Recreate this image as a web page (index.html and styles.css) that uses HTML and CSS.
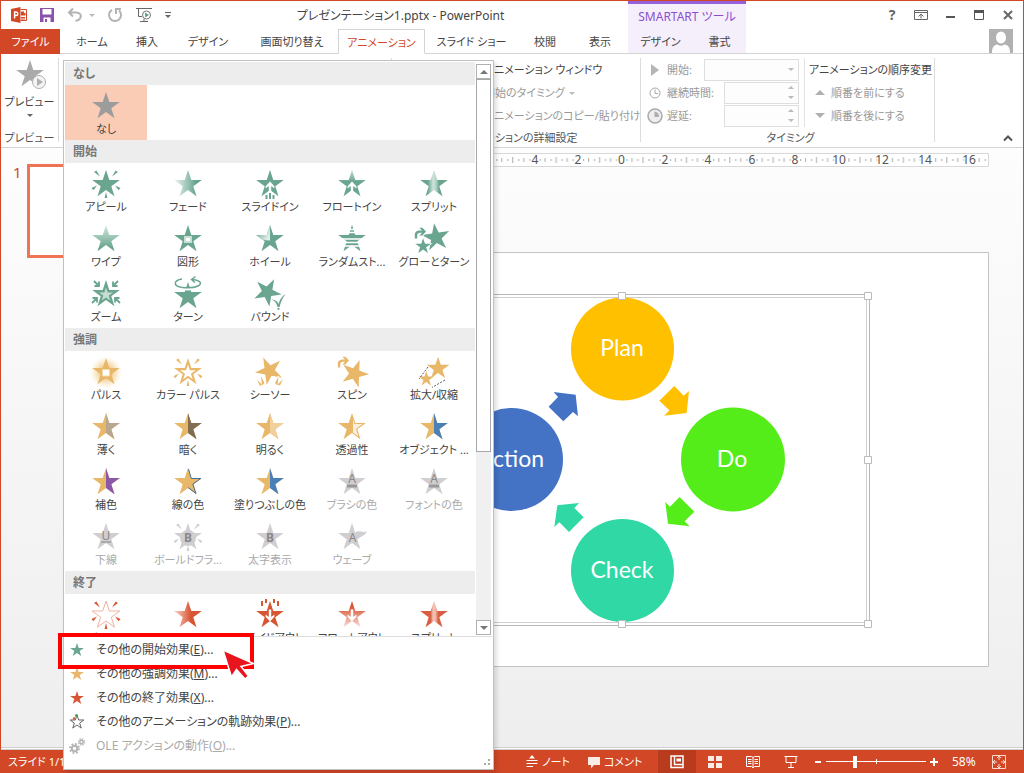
FILE: index.html
```html
<!DOCTYPE html>
<html lang="ja">
<head>
<meta charset="utf-8">
<title>プレゼンテーション1.pptx - PowerPoint</title>
<link rel="stylesheet" href="styles.css">
</head>
<body>
<svg class="defs" aria-hidden="true">
  <defs>
    <path id="star" d="M16 2L19.3 12H29.8L21.3 18.2L24.5 28.2L16 22L7.5 28.2L10.7 18.2L2.2 12H12.7Z"/>
    <path id="half" d="M16 2L19.3 12H29.8L21.3 18.2L24.5 28.2L16 22Z"/>
    <path id="rays" d="M4 4L6.4 2.4L10 8.6ZM28 4L25.6 2.4L22 8.6ZM1.5 20L3.4 22.2L7 17.4ZM30.5 20L28.6 22.2L25 17.4ZM14.6 30h2.8L16 24Z"/>
    <path id="up" d="M16 13.4L20.4 18.2V20.6L17.2 18V25.4H14.8V18L11.6 20.6V18.2Z"/>
    <path id="turn" d="M.8 11.6V8C.8 4.6 3 3.2 8 3.4L5.4 .8H8.4L12 4.6L8.4 8.6H5.4L8 5.8C4.6 5.4 3.2 6.2 3.2 8.4V11.6Z"/>
    <linearGradient id="g-fade"><stop offset=".1" stop-color="#dcebe5"/><stop offset=".8" stop-color="#64a38c"/></linearGradient>
    <linearGradient id="g-wipe" x2="0" y2="1"><stop offset="0" stop-color="#d8e9e2"/><stop offset=".9" stop-color="#64a38c"/></linearGradient>
    <linearGradient id="g-float" x2="0" y2="1"><stop offset="0" stop-color="#c2ddd2"/><stop offset=".45" stop-color="#69a58f"/></linearGradient>
    <linearGradient id="g-split"><stop offset=".28" stop-color="#69a58f"/><stop offset=".47" stop-color="#cfe4db"/><stop offset=".58" stop-color="#b0d2c4"/><stop offset=".68" stop-color="#69a58f"/></linearGradient>
    <linearGradient id="g-wheel" x2="1" y2=".6"><stop offset=".1" stop-color="#69a58f"/><stop offset="1" stop-color="#e0eee8"/></linearGradient>
    <linearGradient id="r-fade"><stop offset=".1" stop-color="#f3beb0"/><stop offset=".6" stop-color="#d85534"/></linearGradient>
    <linearGradient id="r-float" x2="0" y2="1"><stop offset=".2" stop-color="#d85534"/><stop offset="1" stop-color="#f9ddd6"/></linearGradient>
    <linearGradient id="r-split"><stop offset=".38" stop-color="#d85f41"/><stop offset=".46" stop-color="#f3bfb2"/><stop offset=".54" stop-color="#f3bfb2"/><stop offset=".66" stop-color="#d85f41"/></linearGradient>
    <radialGradient id="y-glow"><stop offset=".3" stop-color="#f0c67f"/><stop offset="1" stop-color="#f7dfb2" stop-opacity="0"/></radialGradient>
  </defs>
</svg>

<div class="app">
  <header class="titlebar">
    <div class="quick">
      <svg class="logo" viewBox="0 0 16 16"><path fill="#d24726" d="M0 2L9.5 0V16L0 14Z"/><path fill="none" stroke="#d24726" d="M9.5 2.5H15.5V13.5H9.5M10 10.5h4M10 12h4"/><path fill="#d24726" d="M10 4.5h3v1.500h1.500v2.500h-4.500z"/><path fill="none" stroke="#fff" stroke-width="1.500" d="M3.600 11.500V5H5.200Q6.800 5 6.800 6.800T5.200 8.600H3.600"/></svg>
      <button class="qbtn" aria-label="保存"><svg viewBox="0 0 16 16"><path fill="#8a52ab" d="M1 1H15V15H1Z"/><path fill="#fff" d="M3.500 2H12.500V7.500H3.500ZM4.500 10.500H11.500V15H4.500Z"/><path fill="#8a52ab" d="M6 12h2v3H6z"/></svg></button>
      <button class="qbtn undo" aria-label="元に戻す"><svg viewBox="0 0 16 16"><path fill="none" stroke="#b3b3b3" stroke-width="2" d="M6 1.500L2 5.500L6 9.500M2 5.500H9C13 5.500 14.500 8 13.500 10.500C12.800 12.500 11 13.500 8.500 14"/></svg><i class="caret light"></i></button>
      <button class="qbtn redo" aria-label="繰り返し"><svg viewBox="0 0 16 16"><path fill="none" stroke="#b3b3b3" stroke-width="2" d="M5 2.800A6 6 0 1 0 12 3.500M9 7V2H14"/></svg></button>
      <button class="qbtn show" aria-label="最初から"><svg viewBox="0 0 18 16"><path fill="none" stroke="#666" d="M1 1.500H17M3.500 2V9.500H7M5 14.500H13M9 12V14"/><circle cx="11.500" cy="8" r="4" fill="#fff" stroke="#777"/><path fill="#4f9f83" d="M10.200 5.600L13.800 8L10.200 10.400Z"/></svg></button>
      <button class="qbtn more" aria-label="カスタマイズ"><i class="bar"></i><i class="caret"></i></button>
    </div>
    <h1 class="doc">プレゼンテーション1.pptx - PowerPoint</h1>
    <div class="context">SMARTART ツール</div>
    <div class="winbtns">
      <button aria-label="ヘルプ" class="help">?</button>
      <button aria-label="リボンの表示"><svg viewBox="0 0 14 12"><path fill="none" stroke="#666" d="M.5 1.500H13.500V10.500H.5ZM1 3.500H13M7 9.500V5.500M4.500 7.500L7 5L9.500 7.500"/></svg></button>
      <button aria-label="最小化"><svg viewBox="0 0 14 12"><path stroke="#555" stroke-width="2" d="M3 8H12"/></svg></button>
      <button aria-label="最大化"><svg viewBox="0 0 14 12"><path fill="none" stroke="#555" d="M2.500 2V10.500H11.500V2"/><path stroke="#555" stroke-width="3" d="M2 2.500H12"/></svg></button>
      <button aria-label="閉じる"><svg viewBox="0 0 14 12"><path stroke="#666" stroke-width="2" d="M3 2L11 10M11 2L3 10"/></svg></button>
    </div>
  </header>

  <nav class="tabs">
    <button class="tab file">ファイル</button>
    <button class="tab">ホーム</button>
    <button class="tab">挿入</button>
    <button class="tab">デザイン</button>
    <button class="tab">画面切り替え</button>
    <button class="tab active">アニメーション</button>
    <button class="tab">スライド ショー</button>
    <button class="tab">校閲</button>
    <button class="tab">表示</button>
    <button class="tab smart">デザイン</button>
    <button class="tab smart">書式</button>
    <span class="account"><svg viewBox="0 0 24 24"><path fill="#b1b1b1" d="M0 0H24V24H0Z"/><ellipse cx="12" cy="8.500" rx="5" ry="6" fill="#fff"/><path fill="#fff" d="M3 24C3 18 5 16 8.500 15.500Q12 18 15.500 15.500C19 16 21 18 21 24Z"/></svg></span>
  </nav>

  <section class="ribbon">
    <div class="group preview">
      <button class="big">
        <svg viewBox="0 0 32 32"><use href="#star" fill="#aaa"/><circle cx="25" cy="24" r="6.500" fill="#f4f4f4" stroke="#b0b0b0"/><path fill="#b0b0b0" d="M23 20L29 24L23 28Z"/></svg>
        <span>プレビュー</span>
        <i class="caret"></i>
      </button>
      <div class="gname">プレビュー</div>
    </div>
    <div class="group animation"></div>
    <div class="group advanced">
      <div class="rows">
        <button class="cmd">アニメーション ウィンドウ</button>
        <button class="cmd" disabled>開始のタイミング<i class="caret light"></i></button>
        <button class="cmd" disabled>アニメーションのコピー/貼り付け</button>
      </div>
      <div class="gname">アニメーションの詳細設定</div>
    </div>
    <div class="group timing">
      <div class="split">
        <div class="fields">
          <div class="field"><svg viewBox="0 0 16 16"><path fill="#b5b5b5" d="M4 2L12 8L4 14Z"/></svg><label for="start">開始:</label><span class="box wide"><select id="start" disabled><option></option></select><i class="caret light"></i></span></div>
          <div class="field"><svg viewBox="0 0 16 16"><circle cx="8" cy="8" r="5" fill="none" stroke="#aaa"/><path fill="none" stroke="#aaa" d="M8 4.500V8.500H11"/></svg><label for="dur">継続時間:</label><span class="box"><input id="dur" disabled><span class="spin"><i class="caret light flip"></i><i class="caret light"></i></span></span></div>
          <div class="field"><svg viewBox="0 0 16 16"><circle cx="8" cy="8" r="7" fill="#f0edf0" stroke="#aaa" stroke-width="1.500"/><path fill="#b0adb0" d="M7.500 3.500A5 5 0 0 1 12 9H7.500Z"/></svg><label for="delay">遅延:</label><span class="box"><input id="delay" disabled><span class="spin"><i class="caret light flip"></i><i class="caret light"></i></span></span></div>
        </div>
        <div class="order">
          <div class="cmd">アニメーションの順序変更</div>
          <button class="cmd move" disabled><i class="tri flip"></i>順番を前にする</button>
          <button class="cmd move" disabled><i class="tri"></i>順番を後にする</button>
        </div>
      </div>
      <div class="gname">タイミング</div>
    </div>
    <button class="collapse" aria-label="リボンを折りたたむ"><svg viewBox="0 0 10 8"><path fill="none" stroke="#555" stroke-width="2" d="M1 6.500L5 2.500L9 6.500"/></svg></button>

    <div class="popup">
      <div class="gallery">
        <div class="list">
          <h2>なし</h2>
          <div class="items">
            <button class="item selected"><svg viewBox="0 0 32 32"><use href="#star" fill="#9c9c9c"/></svg>なし</button>
          </div>
          <h2>開始</h2>
          <div class="items green">
            <button class="item"><svg viewBox="0 0 32 32"><use href="#star"/><use href="#rays"/></svg>アピール</button>
            <button class="item"><svg viewBox="0 0 32 32"><use href="#star" fill="url(#g-fade)"/></svg>フェード</button>
            <button class="item"><svg viewBox="0 0 32 32"><use href="#star"/><use href="#up" fill="#fff"/><path d="M11.500 27h2v4h-2zM15 25h2v6h-2zM18.500 27h2v4h-2z"/></svg>スライドイン</button>
            <button class="item"><svg viewBox="0 0 32 32"><use href="#star" fill="url(#g-float)"/><use href="#up" fill="#fff"/></svg>フロートイン</button>
            <button class="item"><svg viewBox="0 0 32 32"><use href="#star" fill="url(#g-split)"/></svg>スプリット</button>
            <button class="item"><svg viewBox="0 0 32 32"><use href="#star" fill="url(#g-wipe)"/></svg>ワイプ</button>
            <button class="item"><svg viewBox="0 0 32 32"><use href="#star"/><path fill="#fff" stroke="#c9dfd6" stroke-width="2" d="M13 14h6v5h-6z"/></svg>図形</button>
            <button class="item"><svg viewBox="0 0 32 32"><use href="#star"/><path fill="url(#g-wheel)" d="M2.200 12H12.700L16 2V17.500L9 17Z"/></svg>ホイール</button>
            <button class="item"><svg viewBox="0 0 32 32"><use href="#star"/><path stroke="#fff" stroke-width="1.500" d="M2 6.500H30M2 9.500H30M2 16H30M2 19.500H30M2 23H30"/></svg>ランダムスト...</button>
            <button class="item"><svg viewBox="0 0 32 32"><use href="#star" transform="translate(2 -2) rotate(-8 16 16)"/><use href="#star" transform="translate(-4 14) scale(.57)" stroke="#fff" stroke-width="2" paint-order="stroke"/><use href="#turn" transform="translate(-4 4)" stroke="#fff" stroke-width="2" paint-order="stroke"/></svg>グローとターン</button>
            <button class="item"><svg viewBox="0 0 32 32"><use href="#star"/><use href="#star" transform="translate(8 8.500) scale(.5)" fill="#c7ddd4"/><path fill="none" stroke="currentColor" stroke-width="1.800" d="M4 3L8.500 7.500M9 3.500V8H4.500M28 3L23.500 7.500M23 3.500V8H27.500M2 25L6.500 20.500M2.500 20H7V24.500M30 25L25.500 20.500M29.500 20H25V24.500"/></svg>ズーム</button>
            <button class="item"><svg viewBox="0 0 32 32"><use href="#star" transform="translate(0 2)"/><path fill="none" stroke="#fff" stroke-width="3" d="M8 9.500C13 11.500 20 11.500 24 9.500"/><path fill="none" stroke="currentColor" stroke-width="1.500" d="M10 1C1 2.500 1.500 8 9 9.300C14 10 22 10 26 8C31 5.500 28 2 20 1.500M23.500 -1.500L19.500 1.500L23 4.500"/></svg>ターン</button>
            <button class="item"><svg viewBox="0 0 32 32"><use href="#star" transform="rotate(28 14 15) translate(-3 -2)"/><path d="M17 21.500C21 21.500 23.500 23 24.500 26C26 21 28 18 31.500 16C28.500 20 27 23.500 25.500 29H23.500C22.500 25 21 22.500 17 21.500ZM23.500 30h2v1.800h-2z"/></svg>バウンド</button>
          </div>
          <h2>強調</h2>
          <div class="items yellow">
            <button class="item"><svg viewBox="0 0 32 32"><circle cx="16" cy="16.500" r="16" fill="url(#y-glow)"/><use href="#star"/><path fill="#fff" stroke="#f4d9ab" d="M12.500 13.500h7v6.500h-7z"/></svg>パルス</button>
            <button class="item"><svg viewBox="0 0 32 32"><use href="#star"/><use href="#star" transform="translate(7 7.500) scale(.56)" fill="#fff"/><use href="#rays"/></svg>カラー パルス</button>
            <button class="item"><svg viewBox="0 0 32 32"><use href="#star" transform="rotate(-25 16 16) translate(0 -2)"/><path stroke="#fff" paint-order="stroke" stroke-width="2" d="M7 20.500L10.500 27L8 29.500ZM24.500 20.500L21 27L23.500 29.500Z"/><path d="M3 24L8 28.500L6 30ZM29 23L23.500 28.500L26 29.500Z"/></svg>シーソー</button>
            <button class="item"><svg viewBox="0 0 32 32"><use href="#star" transform="rotate(20 18 18) translate(2.500 1)"/><use href="#turn" transform="translate(1 0)"/></svg>スピン</button>
            <button class="item"><svg viewBox="0 0 32 32"><use href="#star" transform="translate(7 -1) scale(.82)"/><use href="#star" transform="translate(-.5 14) scale(.55)"/><path fill="none" stroke="#555" stroke-dasharray="2 1.500" d="M10 11L1 23M27 24L14 31.500"/></svg>拡大/収縮</button>
            <button class="item"><svg viewBox="0 0 32 32"><use href="#star"/><use href="#half" fill="#b9a88f"/></svg>薄く</button>
            <button class="item"><svg viewBox="0 0 32 32"><use href="#star"/><use href="#half" fill="#806d52"/></svg>暗く</button>
            <button class="item"><svg viewBox="0 0 32 32"><use href="#star"/><use href="#half" fill="#f2d09b"/></svg>明るく</button>
            <button class="item"><svg viewBox="0 0 32 32"><use href="#star"/><path fill="#fbeedb" d="M17 8L18.500 13H26.500L20 18L22.500 25.500L17 21.500Z"/></svg>透過性</button>
            <button class="item"><svg viewBox="0 0 32 32"><use href="#star"/><use href="#half" fill="#4a80b8"/></svg>オブジェクト ...</button>
            <button class="item"><svg viewBox="0 0 32 32"><use href="#star"/><use href="#half" fill="#8b58a8"/></svg>補色</button>
            <button class="item"><svg viewBox="0 0 32 32"><use href="#star"/><path fill="none" stroke="#456f94" d="M16.500 3L19.300 12.500H28.800L20.800 18.200L24 27.500L16 21.500"/></svg>線の色</button>
            <button class="item"><svg viewBox="0 0 32 32"><use href="#star"/><use href="#half" fill="#4a80b8"/></svg>塗りつぶしの色</button>
            <button class="item" disabled><svg viewBox="0 0 32 32"><use href="#star"/><text x="16" y="17" class="glyph">A</text><path fill="#999" d="M11 18.500h10v3H11z"/></svg>ブラシの色</button>
            <button class="item" disabled><svg viewBox="0 0 32 32"><use href="#star"/><text x="16" y="17" class="glyph">A</text><path fill="#999" d="M11 18.500h10v3H11z"/></svg>フォントの色</button>
            <button class="item" disabled><svg viewBox="0 0 32 32"><use href="#star"/><text x="16" y="19" class="glyph">U</text><path fill="#888" d="M11 20.500h10v1H11z"/></svg>下線</button>
            <button class="item" disabled><svg viewBox="0 0 32 32"><use href="#star"/><use href="#rays"/><circle cx="16" cy="17" r="8"/><text x="16" y="21" class="glyph strong">B</text></svg>ボールドフラ...</button>
            <button class="item" disabled><svg viewBox="0 0 32 32"><use href="#star"/><text x="16" y="21" class="glyph strong">B</text></svg>太字表示</button>
            <button class="item" disabled><svg viewBox="0 0 32 32"><use href="#star"/><path d="M19 12C23 8 26 13 31 10C29 15 25 15 21 18Z"/><text x="16.500" y="21" class="glyph">A</text></svg>ウェーブ</button>
          </div>
          <h2>終了</h2>
          <div class="items red">
            <button class="item"><svg viewBox="0 0 32 32"><use href="#star" fill="#fff" stroke="#eeb3a4"/><use href="#rays"/></svg>クリア</button>
            <button class="item"><svg viewBox="0 0 32 32"><use href="#star" fill="url(#r-fade)"/></svg>フェード</button>
            <button class="item"><svg viewBox="0 0 32 32"><use href="#star"/><use href="#up" fill="#fff" transform="translate(0 36) scale(1 -1)"/><path stroke="#fff" paint-order="stroke" stroke-width="2" d="M7 2h2v5H7zM11 0h2v4h-2zM19 0h2v4h-2zM23 2h2v5h-2z"/></svg>スライドアウト</button>
            <button class="item"><svg viewBox="0 0 32 32"><use href="#star" fill="url(#r-float)"/><use href="#up" fill="#fff" transform="translate(0 36) scale(1 -1)"/></svg>フロートアウト</button>
            <button class="item"><svg viewBox="0 0 32 32"><use href="#star" fill="url(#r-split)"/></svg>スプリット</button>
          </div>
        </div>
        <div class="scroll">
          <button class="arrow" aria-label="上へ"><i class="tri dark flip"></i></button>
          <div class="thumb"></div>
          <button class="arrow" aria-label="下へ"><i class="tri dark"></i></button>
        </div>
      </div>
      <div class="menu">
        <button class="entry green"><svg viewBox="0 0 32 32"><use href="#star"/></svg><span>その他の開始効果(<u>E</u>)...</span></button>
        <button class="entry yellow"><svg viewBox="0 0 32 32"><use href="#star"/></svg><span>その他の強調効果(<u>M</u>)...</span></button>
        <button class="entry red"><svg viewBox="0 0 32 32"><use href="#star"/></svg><span>その他の終了効果(<u>X</u>)...</span></button>
        <button class="entry"><svg viewBox="0 0 32 32"><use href="#star" fill="#fff" stroke="#666" stroke-width="2"/><circle cx="15" cy="3" r="3" fill="#4a9e4a"/><circle cx="10" cy="9" r="2.500" fill="#d9573a"/></svg><span>その他のアニメーションの軌跡効果(<u>P</u>)...</span></button>
        <button class="entry" disabled><svg viewBox="0 0 16 16"><g fill="none" stroke="#b4b4b4"><circle cx="5.500" cy="10.500" r="2.700" stroke-width="2"/><circle cx="5.500" cy="10.500" r="4.500" stroke-width="2" stroke-dasharray="1.800 1.730"/><circle cx="12.500" cy="4" r="1.700" stroke-width="1.500"/><circle cx="12.500" cy="4" r="3" stroke-width="1.500" stroke-dasharray="1.300 1.050"/></g></svg><span>OLE アクションの動作(<u>O</u>)...</span></button>
      </div>
      <svg class="grip" viewBox="0 0 8 8"><path fill="#aaa" d="M5 0h2v2H5zM5 4h2v2H5zM1 4h2v2H1z"/></svg>
      <div class="highlight"></div>
      <svg class="pointer" viewBox="0 0 36 36"><path fill="#e8141e" stroke="#fff" stroke-width="1.500" d="M2 2L32.500 15.500L20 18.500L27.500 28L24 31L15.500 21.500L10.500 29Z"/></svg>
    </div>
  </section>

  <main class="work">
    <aside class="thumbs"><span class="num">1</span><div class="thumbnail"></div></aside>
    <div class="editor">
      <svg class="ruler" viewBox="0 0 735 14">
        <defs><pattern id="ticks" width="43.400" height="14" x="367.500" patternUnits="userSpaceOnUse"><path fill="#aaa" d="M5 6h1v2h-1zM10 5h1v4h-1zM16 6h1v2h-1zM21 4h1v6h-1zM27 6h1v2h-1zM32 5h1v4h-1zM38 6h1v2h-1z"/></pattern></defs>
        <path fill="#fff" stroke="#d8d8d8" d="M.5 .5H734.500V13.500H.5Z"/>
        <path fill="url(#ticks)" d="M1 1H733V13H1Z"/>
        <g class="marks">
          <text x="281" y="11">4</text><text x="324" y="11">2</text><text x="367.500" y="11">0</text><text x="411" y="11">2</text><text x="454" y="11">4</text><text x="498" y="11">6</text><text x="541" y="11">8</text><text x="585" y="11">10</text><text x="628" y="11">12</text><text x="671" y="11">14</text><text x="715" y="11">16</text>
        </g>
      </svg>
      <div class="stage">
        <svg class="slide" viewBox="0 0 735 415">
          <path fill="#fff" stroke="#c3c3c3" d="M.5 .5H734.500V414.500H.5Z"/>
          <g transform="translate(1 1)">
            <path fill="none" stroke="#b8b8b8" d="M118.500 41.500H614.500V372.500H118.500Z"/>
            <path fill="none" stroke="#cfcfcf" d="M121.500 44.500H611.500V369.500H121.500Z"/>
            <circle cx="367.500" cy="96" r="51.500" fill="#ffc000"/>
            <circle cx="478" cy="206.500" r="52" fill="#54ed1a"/>
            <circle cx="367.500" cy="317.500" r="51.500" fill="#2fd8a5"/>
            <circle cx="256.500" cy="206.500" r="51.500" fill="#4472c4"/>
            <g transform="translate(225 27) scale(.3333)">
              <path fill="#ffc000" d="M583 318L611 347L627 333L620 399L553 407L568 391L538 362Z"/>
              <path fill="#54ed1a" d="M599 651L643 695L614 724L629 739L564 731L556 666L570 680Z"/>
              <path fill="#2fd8a5" d="M297 669L283 684L311 712L267 756L238 727L223 741L232 676Z"/>
              <path fill="#4472c4" d="M221 336L287 344L294 409L279 396L250 424L206 380L234 351Z"/>
            </g>
            <g class="nodes"><text x="367" y="103">Plan</text><text x="477" y="214">Do</text><text x="367" y="325">Check</text><text x="256" y="214">Action</text></g>
            <path fill="#fff" stroke="#bbb" d="M363.500 39.500h7v7h-7zM609.500 39.500h7v7h-7zM609.500 203.500h7v7h-7zM609.500 367.500h7v7h-7zM363.500 367.500h7v7h-7z"/>
          </g>
        </svg>
      </div>
    </div>
  </main>

  <footer class="status">
    <span class="page">スライド 1/1</span>
    <button class="sbtn"><svg viewBox="0 0 12 14"><path fill="#fff" d="M6 0L9 3.500H3Z"/><path stroke="#fff" d="M.5 5.500H11.500M.5 8.500H11.500M.5 11.500H7"/></svg>ノート</button>
    <button class="sbtn"><svg viewBox="0 0 12 14"><path fill="#fdece6" d="M0 2H12V10H6L3 13.500V10H0Z"/></svg>コメント</button>
    <div class="views">
      <button class="on" aria-label="標準"><svg viewBox="0 0 14 14"><path fill="none" stroke="#fff" stroke-width="1.500" d="M1 1H13V12.500H1ZM4.500 1V9.500H13"/><path fill="#fff" d="M6.500 3.500h4.500v3H6.500z"/></svg></button>
      <button aria-label="スライド一覧"><svg viewBox="0 0 14 14"><path fill="#fdece6" d="M0 1h6v5H0zM8 1h6v5H8zM0 8h6v5H0zM8 8h6v5H8z"/></svg></button>
      <button aria-label="閲覧表示"><svg viewBox="0 0 14 14"><path fill="none" stroke="#fff" d="M.5 1.500H5.500L7 2.500L8.500 1.500H13.500V11.500H8.500L7 13L5.500 11.500H.5ZM7 2V13M2 4.500H5.500M2 6.500H5.500M2 8.500H5.500M8.500 4.500H12M8.500 6.500H12M8.500 8.500H12"/></svg></button>
      <button aria-label="スライド ショー"><svg viewBox="0 0 14 14"><path fill="none" stroke="#fff" d="M.5 1.500H13.500M2 2V7.500H12V2M7 8V12.500M4 12.500H10"/></svg></button>
    </div>
    <div class="zoom">
      <button aria-label="縮小"><svg viewBox="0 0 8 8"><path stroke="#fff" stroke-width="2" d="M1 4H7"/></svg></button>
      <input type="range" min="0" max="100" value="28" aria-label="ズーム">
      <button aria-label="拡大"><svg viewBox="0 0 8 8"><path stroke="#fff" stroke-width="2" d="M0 4H8M4 0V8"/></svg></button>
      <span class="pct">58%</span>
      <button class="fit" aria-label="ウィンドウに合わせる"><svg viewBox="0 0 14 14"><path fill="none" stroke="#fbd9cf" d="M.5 .5H13.500V13.500H.5ZM7 1V5M5 3L7 1L9 3M7 9V13M5 11L7 13L9 11M1 7H5M3 5L1 7L3 9M9 7H13M11 5L13 7L11 9"/></svg></button>
    </div>
  </footer>
</div>
</body>
</html>
```
FILE: styles.css
```css
* { box-sizing: border-box; }
body {
  margin: 0;
  font: 12px/16px "Noto Sans", "Noto Sans CJK JP", sans-serif;
  font-feature-settings: "palt";
  color: #444;
}
button, input, select { font: inherit; font-feature-settings: inherit; color: inherit; margin: 0; padding: 0; border: 0; background: none; white-space: nowrap; }
svg { display: block; flex: none; }
.defs { position: absolute; width: 0; height: 0; }

.app { min-height: 100vh; display: flex; flex-direction: column; border: 1px solid #d24726; border-bottom: 0; overflow: hidden; background: #fff; }

.caret { display: inline-block; border: 3px solid transparent; border-top-color: #666; border-bottom: 0; }
.caret.light { border-top-color: #bbb; }
.tri { display: inline-block; border: 5px solid transparent; border-top-color: #b0b0b0; border-bottom: 0; }
.tri.dark { border-width: 4px; border-bottom: 0; border-top-color: #777; }
.flip { transform: rotate(180deg); }

/* title bar */
.titlebar { height: 28px; display: grid; grid-template-columns: 172px 455px 118px 1fr; align-items: center; }
.quick { display: flex; align-items: center; padding-left: 10px; gap: 12px; }
.logo, .qbtn svg { width: 16px; height: 16px; }
.qbtn { display: flex; align-items: center; gap: 6px; }
.show svg { width: 18px; }
.more { flex-direction: column; gap: 2px; }
.bar { width: 6px; height: 1px; background: #666; }
.doc { margin: 0; padding-top: 1px; font-size: 12px; font-weight: 400; text-align: center; white-space: nowrap; }
.context { align-self: stretch; border-top: 3px solid #9560d8; background: #f5effc; color: #8a4fd0; text-align: center; padding-top: 5px; }
.winbtns { display: flex; justify-content: flex-end; padding-right: 8px; gap: 15px; }
.winbtns button { width: 14px; display: grid; place-items: center; }
.winbtns svg { width: 14px; height: 12px; }
.help { font-weight: 700; font-size: 14px; color: #666; }

/* tabs */
.tabs { height: 25px; display: grid; grid-template-columns: 59px 64px 46px 76px 92px 87px 93px 54px 56px 65px 53px 1fr; font-size: 11px; }
.tab { border-bottom: 1px solid #d4d4d4; padding-top: 2px; }
.file { background: #d24726; color: #fff; border-bottom-color: #d24726; }
.active { color: #d24726; border: 1px solid #d4d4d4; border-bottom-color: #fff; }
.smart { background: #f5effc; }
.account { border-bottom: 1px solid #d4d4d4; display: flex; justify-content: flex-end; padding-right: 10px; }
.account svg { width: 24px; height: 24px; }

/* ribbon */
.ribbon { position: relative; z-index: 2; height: 94px; display: flex; padding: 4px 0 5px; border-bottom: 1px solid #d4d4d4; font-size: 11px; }
.group { border-right: 1px solid #dcdcdc; display: flex; flex-direction: column; justify-content: space-between; }
.gname { text-align: center; line-height: 16px; margin-bottom: -4px; white-space: nowrap; color: #555; }
.preview { width: 58px; }
.big { display: flex; flex-direction: column; align-items: center; gap: 4px; }
.big svg { width: 32px; height: 32px; }
.animation { width: 333px; }
.advanced { width: 249px; }
.rows { padding-left: 92px; }
.rows, .order { display: grid; grid-auto-rows: 23px; justify-items: start; align-items: center; }
.cmd { white-space: nowrap; }
.cmd .caret { margin: 0 4px 2px; }
.cmd:disabled, .field { color: #999; }
.timing { width: 294px; padding-left: 6px; }
.split { display: flex; }
.fields { flex: 0 0 158px; padding-right: 5px; border-right: 1px solid #e2e2e2; }
.field { display: flex; align-items: center; height: 23px; }
.field svg { width: 16px; height: 16px; margin-right: 4px; }
.field label { white-space: nowrap; }
.box { width: 75px; height: 22px; margin-left: auto; border: 1px solid #dedede; background: #fdfdfd; display: flex; align-items: center; padding-right: 4px; }
.box.wide { width: 95px; }
.box select, .box input { appearance: none; flex: 1; min-width: 0; height: 100%; }
.spin { display: grid; gap: 7px; }
.order { padding-left: 4px; }
.move { display: flex; align-items: center; gap: 6px; padding-left: 6px; }
.collapse { align-self: flex-end; margin-left: auto; padding-right: 10px; }
.collapse svg { width: 10px; height: 8px; }

/* animation gallery drop-down */
.popup { position: absolute; left: 62px; top: 6px; width: 431px; padding: 1px; background: #fff; border: 1px solid #c0c0c0; box-shadow: 3px 3px 4px rgba(0,0,0,.12); }
.gallery { display: flex; height: 575px; border-bottom: 1px solid #dedede; }
.list { width: 410px; overflow: hidden; }
.list h2 { margin: 0; padding: 4px 8px 3px; font-size: 12px; line-height: 16px; font-weight: 700; color: #777; background: #ededed; }
.items { display: grid; grid-template-columns: repeat(5, 82px); grid-auto-rows: 55px; }
.item { display: flex; flex-direction: column; align-items: center; justify-content: flex-start; padding-top: 5px; line-height: 14px; }
.item svg { width: 32px; height: 32px; overflow: visible; fill: currentColor; }
.selected { background: #fbccb5; }
.green svg { color: #69a58f; }
.yellow svg { color: #e8b768; }
.red svg { color: #d85534; }
.item:disabled, .entry:disabled { color: #aaa; }
.item:disabled svg { color: #d0ced1; }
.glyph { font: 12px "Noto Sans", sans-serif; text-anchor: middle; fill: #888; }
.strong { font-weight: 700; }
.scroll { width: 15px; margin: 2px 0 1px 1px; display: flex; flex-direction: column; background: #f0f0f0; }
.arrow { height: 15px; border: 1px solid #b0b0b0; background: #fff; display: grid; place-items: center; }
.thumb { height: 373px; border: 1px solid #a8a8a8; background: #fff; margin-bottom: auto; }
.menu { padding: 1px 0 10px; font-size: 12px; }
.entry { width: 100%; height: 24px; display: flex; align-items: center; gap: 11px; padding-left: 4px; }
.entry svg { width: 16px; height: 16px; fill: currentColor; overflow: visible; }
.grip { position: absolute; right: 2px; bottom: 2px; width: 8px; height: 8px; }
.highlight { position: absolute; left: -6px; top: 572px; width: 196px; height: 36px; border: 4px solid #f00; }
.pointer { position: absolute; left: 157px; top: 587px; width: 36px; height: 36px; }

/* workspace */
.work { flex: 1; display: grid; grid-template-columns: 253px 1fr; background: linear-gradient(#fdfdfd, #eee); border-bottom: 3px double #d0d0d0; }
.thumbs { display: flex; align-items: flex-start; gap: 5px; padding: 16px 0 0 12px; }
.num { width: 9px; font-size: 15px; line-height: 16px; color: #d24726; }
.thumbnail { width: 167px; height: 94px; border: 3px solid #f07354; background: #fff; }
.editor { display: flex; flex-direction: column; padding: 5px 34px 0 0; }
.ruler, .slide { width: 100%; height: auto; }
.marks text { font: 12px "Noto Sans", sans-serif; text-anchor: middle; fill: #555; stroke: #fff; stroke-width: 2px; paint-order: stroke; }
.stage { flex: 1; display: flex; align-items: center; padding-top: 4px; }
.nodes text { font: 23px Lato, sans-serif; text-anchor: middle; fill: #fff; }

/* status bar */
.status { height: 23px; display: flex; align-items: center; background: #d24726; color: #fff; padding-left: 7px; font-size: 11px; }
.page { width: 518px; }
.sbtn { display: flex; align-items: center; gap: 4px; width: 62px; }
.sbtn svg { width: 12px; height: 14px; }
.views { display: flex; align-self: stretch; margin-left: auto; }
.views button { width: 38px; display: grid; place-items: center; }
.views .on { background: #b83b1d; }
.views svg, .fit svg { width: 14px; height: 14px; }
.zoom { display: flex; align-items: center; gap: 4px; padding: 0 17px 0 4px; }
.zoom svg { width: 8px; height: 8px; }
.zoom input { appearance: none; width: 100px; height: 14px; margin: 0; background: linear-gradient(#fff, #fff) center / 100% 1px no-repeat, linear-gradient(#fff, #fff) center / 1px 5px no-repeat; }
.zoom input::-webkit-slider-thumb { appearance: none; width: 4px; height: 12px; background: #fff; }
.pct { margin-left: 10px; width: 36px; font-size: 12px; }
.zoom .fit svg { width: 14px; height: 14px; }
```
